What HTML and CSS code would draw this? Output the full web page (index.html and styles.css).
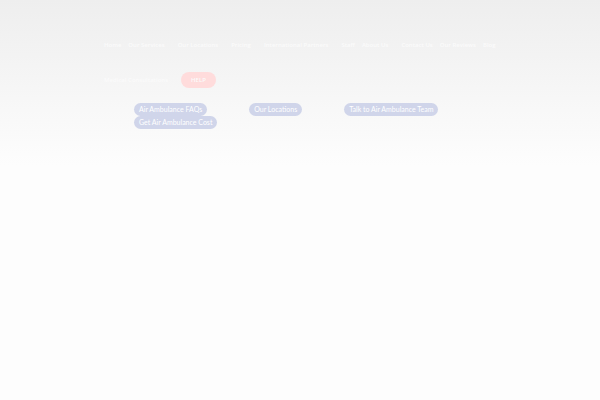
FILE: index.html
```
<!DOCTYPE html>
<html lang="en">
  <head>
    <meta charset="UTF-8" />
    <meta name="viewport" content="width=device-width, initial-scale=1.0" />
    <title>Air Ambulance</title>
    <link rel="stylesheet" href="styles.css">
  </head>
  <body>
    <header class="header">
      <nav class="main-nav">
        <ul class="menu">
          <li class="tight"><a href="#">Home</a></li>
          <li><a href="#">Our Services</a></li>
          <li><a href="#">Our Locations</a></li>
          <li><a href="#">Pricing</a></li>
          <li><a href="#">International Partners</a></li>
          <li class="tight"><a href="#">Staff</a></li>
          <li><a href="#">About Us</a></li>
          <li class="tight"><a href="#">Contact Us</a></li>
          <li class="tight"><a href="#">Our Reviews</a></li>
          <li><a href="#">Blog</a></li>
        </ul>
        <div class="menu-second">
          <a href="#">Medical Consultations</a>
          <a href="#" class="help-button">HELP</a>
        </div>
      </nav>
      <ul class="quick-links">
        <li><a href="#">Air Ambulance FAQs</a></li>
        <li><a href="#">Our Locations</a></li>
        <li><a href="#">Talk to Air Ambulance Team</a></li>
        <li><a href="#">Get Air Ambulance Cost</a></li>
      </ul>
    </header>
  </body>
</html>
```
FILE: styles.css
```
body {
  font-family: 'Lato', sans-serif;
  background-color: #fdfdfd;
  color: #fff;
  margin: 0;
}
a {
  color: inherit;
  text-decoration: none;
}
ul {
  list-style: none;
  margin: 0;
  padding: 0;
}
.header {
  background: linear-gradient(#eee, #fdfdfd);
  padding: 40px 100px 36px 104px;
}
.main-nav {
  font-family: 'Open Sans', sans-serif;
  font-size: 6px;
  font-weight: 600;
  line-height: 10px;
  color: #fbfbfb;
}
.menu {
  display: flex;
  white-space: nowrap;
}
.menu li {
  margin-right: 13px;
}
.menu .tight {
  margin-right: 7px;
}
.menu-second {
  display: flex;
  align-items: center;
  gap: 13px;
  margin-top: 22px;
}
.help-button {
  background-color: #ffdcdc;
  border-radius: 8px;
  padding: 3px 10px;
}
.quick-links {
  display: flex;
  flex-wrap: wrap;
  column-gap: 42px;
  margin-top: 15px;
  padding-left: 30px;
  font-size: 7px;
  line-height: 13px;
}
.quick-links a {
  display: block;
  background-color: #d0d5ea;
  border-radius: 7px;
  padding: 0 5px;
}
```
